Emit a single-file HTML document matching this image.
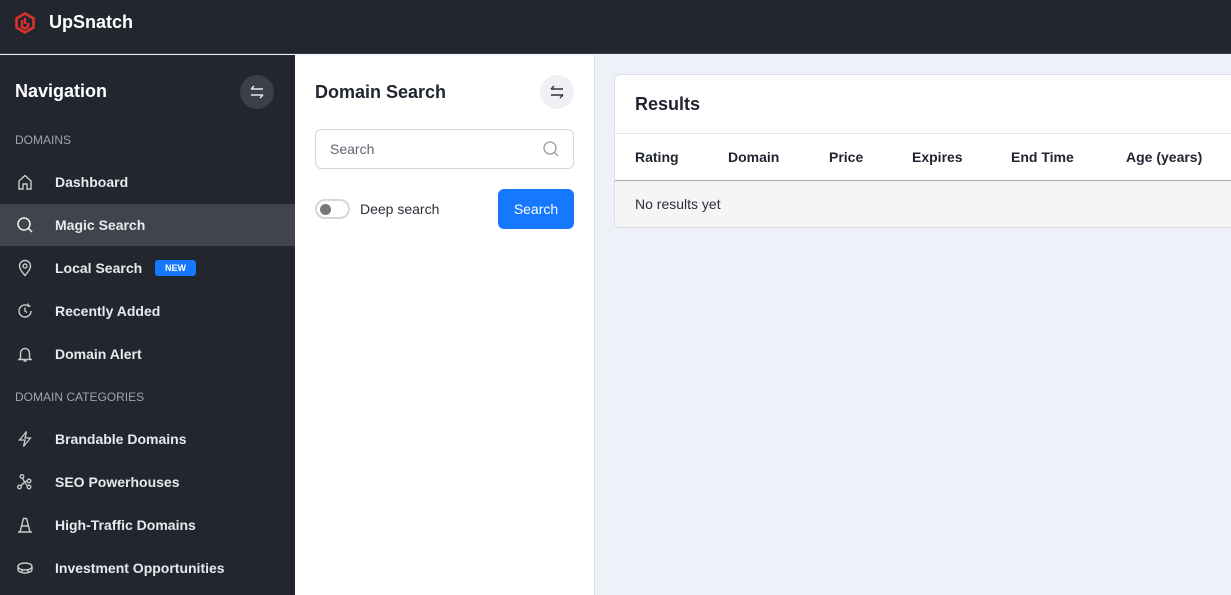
<!DOCTYPE html>
<html><head><meta charset="utf-8"><style>
*{box-sizing:border-box;margin:0;padding:0}
body{width:1231px;height:595px;overflow:hidden;font-family:"Liberation Sans",Arial,sans-serif;background:#eef1f8;position:relative}
.top{position:absolute;left:0;top:0;width:1231px;height:54px;background:#22262f;border-bottom:1px solid #3a3f4a}
.logo{position:absolute;left:14px;top:12px}
.brand{position:absolute;left:49px;top:12px;color:#fff;font-weight:bold;font-size:18px}
.side{position:absolute;left:0;top:55px;width:295px;height:540px;background:#22262f;color:#e6e7ea}
.navh{position:absolute;left:15px;top:26px;font-size:18px;font-weight:bold;color:#fff}
.circ{position:absolute;width:34px;height:34px;border-radius:50%;display:flex;align-items:center;justify-content:center}
.sec{position:absolute;left:15px;font-size:12px;color:#a0a4ad}
.item{position:absolute;left:0;width:295px;height:42px;display:flex;align-items:center;font-size:14px;font-weight:bold;color:#e8e9ec}
.item svg{position:absolute;left:16px}
.item span.t{position:absolute;left:55px}
.act{background:#40444d}
.new{position:absolute;left:155px;background:#1677ff;color:#fff;font-size:9px;font-weight:bold;padding:3px 10px;border-radius:3px}
.mid{position:absolute;left:295px;top:55px;width:300px;height:540px;background:#fff;border-right:1px solid #dde0e6}
.card{position:absolute;left:614px;top:74px;width:640px;height:154px;background:#fff;border:1px solid #dcdfe4;border-radius:6px;overflow:hidden}
</style></head><body>
<div class="top">
<svg class="logo" width="22" height="22" viewBox="0 0 22 22"><path d="M11 1.5L19.5 6.5V15.5L11 20.5L2.5 15.5V6.5Z" fill="none" stroke="#d9312b" stroke-width="2.6"/><path d="M11 6V12M8 8V15L11 16.5L14 15V11" fill="none" stroke="#d9312b" stroke-width="2.4"/></svg>
<div class="brand">UpSnatch</div>
</div>
<div class="side">
<div class="navh">Navigation</div>
<div class="circ" style="left:240px;top:20px;background:#3b3f48"><svg width="16" height="14" viewBox="0 0 16 14" fill="none" stroke="#e6e7ea" stroke-width="1.4"><path d="M2 4H14M2 4L5 1M14 10H2M14 10L11 13"/></svg></div>
<div class="sec" style="top:78px">DOMAINS</div>
<div class="item" style="top:106px"><svg width="18" height="18" viewBox="0 0 18 18" fill="none" stroke="#ccc" stroke-width="1.4"><path d="M3 8L9 2.5L15 8V16H11V11H7V16H3Z"/></svg><span class="t">Dashboard</span></div>
<div class="item act" style="top:149px"><svg width="18" height="18" viewBox="0 0 18 18" fill="none" stroke="#eee" stroke-width="1.5"><circle cx="8" cy="8" r="6"/><path d="M12.5 12.5L16 16"/></svg><span class="t">Magic Search</span></div>
<div class="item" style="top:192px"><svg width="18" height="18" viewBox="0 0 18 18" fill="none" stroke="#ccc" stroke-width="1.4"><path d="M9 16.5C5 12 3.5 9.5 3.5 7A5.5 5.5 0 0 1 14.5 7C14.5 9.5 13 12 9 16.5Z"/><circle cx="9" cy="7" r="2"/></svg><span class="t">Local Search</span><span class="new">NEW</span></div>
<div class="item" style="top:235px"><svg width="18" height="18" viewBox="0 0 18 18" fill="none" stroke="#ccc" stroke-width="1.4"><path d="M15 9A6 6 0 1 1 12 3.8M9 5.5V9L11 10.5M12 1.5V4H14.5"/></svg><span class="t">Recently Added</span></div>
<div class="item" style="top:278px"><svg width="18" height="18" viewBox="0 0 18 18" fill="none" stroke="#ccc" stroke-width="1.4"><path d="M4.5 13V8A4.5 4.5 0 0 1 13.5 8V13L15 14.5H3ZM7.5 16H10.5"/></svg><span class="t">Domain Alert</span></div>
<div class="sec" style="top:335px">DOMAIN CATEGORIES</div>
<div class="item" style="top:363px"><svg width="18" height="18" viewBox="0 0 18 18" fill="none" stroke="#ccc" stroke-width="1.3"><path d="M10.5 1.5L3.5 10H9L7.5 16.5L14.5 8H9Z"/></svg><span class="t">Brandable Domains</span></div>
<div class="item" style="top:406px"><svg width="18" height="18" viewBox="0 0 18 18" fill="none" stroke="#ccc" stroke-width="1.3"><circle cx="6" cy="3.5" r="1.8"/><circle cx="13" cy="8" r="1.8"/><circle cx="3.5" cy="14" r="1.8"/><circle cx="13" cy="14" r="1.8"/><path d="M6.5 5.2L8.5 9M8.5 9L11.2 8M8.5 9L5 12.8M8.5 9L11.5 13"/></svg><span class="t">SEO Powerhouses</span></div>
<div class="item" style="top:449px"><svg width="18" height="18" viewBox="0 0 18 18" fill="none" stroke="#ccc" stroke-width="1.4"><path d="M2 16H16M4 16L7.5 2.5H10.5L14 16M6 10H12"/></svg><span class="t">High-Traffic Domains</span></div>
<div class="item" style="top:492px"><svg width="18" height="18" viewBox="0 0 18 18" fill="none" stroke="#ccc" stroke-width="1.4"><ellipse cx="9" cy="7.5" rx="7" ry="3.5"/><path d="M2 7.5V10.5C2 12.5 5 14 9 14S16 12.5 16 10.5V7.5M6 11V13.5M12 11V13.5"/></svg><span class="t">Investment Opportunities</span></div>
</div>
<div class="mid">
<div style="position:absolute;left:20px;top:27px;font-size:18px;font-weight:bold;color:#1f2430">Domain Search</div>
<div class="circ" style="left:245px;top:20px;background:#eef0f3"><svg width="16" height="14" viewBox="0 0 16 14" fill="none" stroke="#333" stroke-width="1.4"><path d="M2 4H14M2 4L5 1M14 10H2M14 10L11 13"/></svg></div>
<div style="position:absolute;left:20px;top:74px;width:259px;height:40px;border:1px solid #d4d7dc;border-radius:6px"><span style="position:absolute;left:14px;top:11px;font-size:14px;color:#5e6470">Search</span><svg style="position:absolute;right:13px;top:10px" width="18" height="18" viewBox="0 0 18 18" fill="none" stroke="#999" stroke-width="1.3"><circle cx="8" cy="8" r="6"/><path d="M12.3 12.3L16 16"/></svg></div>
<div style="position:absolute;left:20px;top:144px;width:35px;height:20px;border:2px solid #d4d7dc;border-radius:10px"><div style="position:absolute;left:3px;top:3px;width:11px;height:11px;border-radius:50%;background:#777"></div></div>
<div style="position:absolute;left:65px;top:146px;font-size:14px;color:#2a2f38">Deep search</div>
<div style="position:absolute;left:203px;top:134px;width:76px;height:40px;background:#1677ff;border-radius:6px;color:#fff;font-size:14px;text-align:center;line-height:40px">Search</div>
</div>
<div class="card">
<div style="position:absolute;left:20px;top:19px;font-size:18px;font-weight:bold;color:#1f2430">Results</div>
<div style="position:absolute;left:0;top:58px;width:100%;border-top:1px solid #e3e5e8"></div>
<div style="position:absolute;left:0;top:59px;width:100%;height:47px;border-bottom:1px solid #a5a9b0;font-size:14px;font-weight:bold;color:#1f2430">
<span style="position:absolute;left:20px;top:15px">Rating</span>
<span style="position:absolute;left:113px;top:15px">Domain</span>
<span style="position:absolute;left:214px;top:15px">Price</span>
<span style="position:absolute;left:297px;top:15px">Expires</span>
<span style="position:absolute;left:396px;top:15px">End Time</span>
<span style="position:absolute;left:511px;top:15px">Age (years)</span></div>
<div style="position:absolute;left:0;top:106px;width:100%;height:48px;background:#f5f5f5;font-size:14px;color:#2a2f38"><span style="position:absolute;left:20px;top:15px">No results yet</span></div>
</div>
</body></html>
